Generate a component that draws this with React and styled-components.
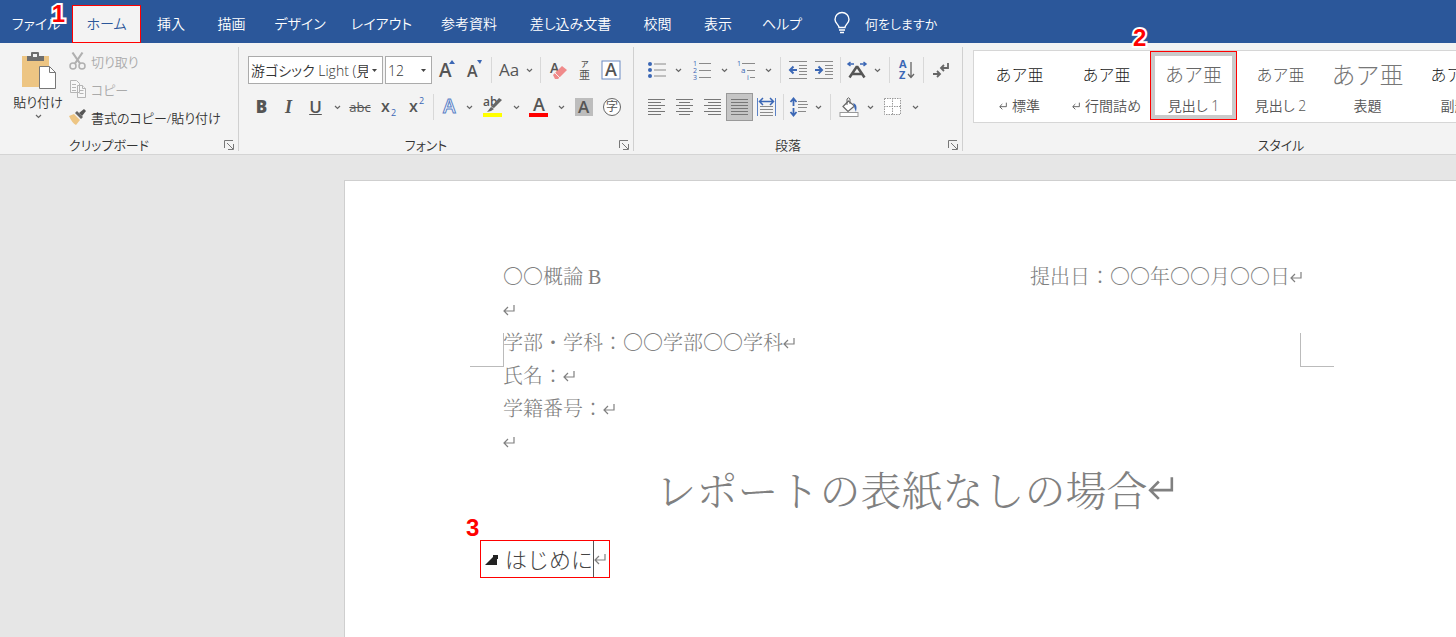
import React from 'react'
import styled, { createGlobalStyle, css } from 'styled-components'

const UI_FONT = "'Open Sans', 'Noto Sans CJK JP', sans-serif"
const DOC_FONT = "'Liberation Serif', 'Noto Serif CJK JP', 'Noto Sans CJK JP', serif"

const tabs = [
  { label: 'ファイル', width: 72, badge: '1' },
  { label: 'ホーム', width: 69, active: true },
  { label: '挿入', width: 60 },
  { label: '描画', width: 61 },
  { label: 'デザイン', width: 76 },
  { label: 'レイアウト', width: 87 },
  { label: '参考資料', width: 88 },
  { label: '差し込み文書', width: 115 },
  { label: '校閲', width: 59 },
  { label: '表示', width: 62 },
  { label: 'ヘルプ', width: 66 },
]

const styleItems = [
  { name: '標準', size: 16, color: '#222', mark: true },
  { name: '行間詰め', size: 16, color: '#222', mark: true },
  { name: '見出し 1', size: 19, color: '#666', selected: true },
  { name: '見出し 2', size: 16, color: '#555' },
  { name: '表題', size: 24, color: '#777' },
  { name: '副題', size: 16, color: '#222' },
]

const App = () => {
  return (
    <Window>
      <GlobalStyle />
      <TabBar aria-label="リボン タブ">
        {tabs.map((tab) => (
          <Tab key={tab.label} type="button" $width={tab.width} $active={tab.active}>
            {tab.label}
            {tab.badge && <TabBadge>{tab.badge}</TabBadge>}
          </Tab>
        ))}
        <TellMe type="button">
          <BulbIcon />
          何をしますか
        </TellMe>
      </TabBar>

      <Ribbon>
        <ClipboardGroup />
        <FontGroup />
        <ParagraphGroup />
        <StylesGroup />
      </Ribbon>

      <Workspace>
        <Page>
          <CropMark $side="left" />
          <CropMark $side="right" />
          <HeaderLine>
            <span>〇〇概論 B</span>
            <span>
              提出日：〇〇年〇〇月〇〇日
              <ReturnMark />
            </span>
          </HeaderLine>
          <Line>
            <ReturnMark />
          </Line>
          <Line>
            学部・学科：〇〇学部〇〇学科
            <ReturnMark />
          </Line>
          <Line>
            氏名：
            <ReturnMark />
          </Line>
          <Line>
            学籍番号：
            <ReturnMark />
          </Line>
          <Line>
            <ReturnMark />
          </Line>
          <Title>
            レポートの表紙なしの場合
            <ReturnMark size={26} />
          </Title>
          <Heading>
            <HeadingBadge>3</HeadingBadge>
            <CollapseIcon />
            <HeadingText>はじめに</HeadingText>
            <Caret />
            <ReturnMark />
          </Heading>
        </Page>
      </Workspace>
    </Window>
  )
}

const ClipboardGroup = () => (
  <Group $width={239}>
    <ClipboardBody>
      <PasteButton type="button">
        <PasteIcon />
        <span>貼り付け</span>
        <Chevron />
      </PasteButton>
      <ClipboardList>
        <ClipboardItem type="button" disabled>
          <ScissorsIcon />
          切り取り
        </ClipboardItem>
        <ClipboardItem type="button" disabled>
          <CopyIcon />
          コピー
        </ClipboardItem>
        <ClipboardItem type="button">
          <BrushIcon />
          書式のコピー/貼り付け
        </ClipboardItem>
      </ClipboardList>
    </ClipboardBody>
    <GroupFooter label="クリップボード" launcher />
  </Group>
)

const FontGroup = () => (
  <Group $width={395}>
    <ToolRows>
      <ToolRow>
        <ComboBox $width={135}>
          <select aria-label="フォント" defaultValue="yu">
            <option value="yu">游ゴシック Light (見出しのフォント)</option>
          </select>
          <ComboArrow />
        </ComboBox>
        <ComboBox $width={47}>
          <select aria-label="フォント サイズ" defaultValue="12">
            <option value="12">12</option>
          </select>
          <ComboArrow />
        </ComboBox>
        <Tool label="フォント サイズの拡大" width={28}>
          <svg width="18" height="22">
            <GlyphText x="0" y="18" $size={19} $weight={600}>A</GlyphText>
            <path d="M10 5l3-4 3 4z" fill="#3b67b5" />
          </svg>
        </Tool>
        <Tool label="フォント サイズの縮小" width={26}>
          <svg width="18" height="22">
            <GlyphText x="1" y="18" $size={16} $weight={600}>A</GlyphText>
            <path d="M11 1h5l-2 4z" fill="#3b67b5" />
          </svg>
        </Tool>
        <Divider />
        <Tool label="文字種の変換" width={26}>
          <Letter $size={17}>Aa</Letter>
        </Tool>
        <Menu label="文字種の変換メニュー" />
        <Divider />
        <Tool label="すべての書式をクリア" width={28}>
          <svg width="18" height="22">
            <GlyphText x="0" y="14" $size={14} $weight={600}>A</GlyphText>
            <path d="M3 16l9-9 5 4-9 9H5z" fill="#f08a8a" />
            <path d="M5 14l5 5" stroke="#f2f2f2" />
          </svg>
        </Tool>
        <Tool label="ルビ" width={24}>
          <svg width="14" height="22">
            <GlyphText x="3" y="8" $size={8} $weight={500}>ア</GlyphText>
            <GlyphText x="1" y="20" $size={11} $weight={400}>亜</GlyphText>
          </svg>
        </Tool>
        <Tool label="囲み線" width={28}>
          <svg width="20" height="20">
            <rect x="1" y="1" width="18" height="18" fill="#fff" stroke="#6d8cc4" />
            <GlyphText x="4" y="16" $size={18} $weight={600}>A</GlyphText>
          </svg>
        </Tool>
      </ToolRow>
      <ToolRow>
        <Tool label="太字" width={27}>
          <Letter $size={17} $weight={800}>B</Letter>
        </Tool>
        <Tool label="斜体" width={27}>
          <Letter as="i" $size={18} $weight={700} $serif>I</Letter>
        </Tool>
        <Tool label="下線" width={27}>
          <Letter as="u" $size={17} $weight={600}>U</Letter>
        </Tool>
        <Menu label="下線メニュー" wide />
        <Tool label="取り消し線" width={28}>
          <Letter as="s" $size={13}>abc</Letter>
        </Tool>
        <Tool label="下付き" width={28}>
          <svg width="14" height="22">
            <GlyphText x="0" y="16" $size={16} $weight={600}>x</GlyphText>
            <GlyphText x="10" y="20" $size={9} $color="#3b67b5">2</GlyphText>
          </svg>
        </Tool>
        <Tool label="上付き" width={28}>
          <svg width="14" height="22">
            <GlyphText x="0" y="16" $size={16} $weight={600}>x</GlyphText>
            <GlyphText x="10" y="8" $size={9} $color="#3b67b5">2</GlyphText>
          </svg>
        </Tool>
        <Divider />
        <Tool label="文字の効果" width={24}>
          <svg width="18" height="22">
            <GlyphText x="2" y="17" $size={19} $weight={600} $color="#fff" $stroke="#5b82c6">A</GlyphText>
          </svg>
        </Tool>
        <Menu label="文字の効果メニュー" />
        <Tool label="蛍光ペンの色" width={32}>
          <svg width="20" height="22">
            <GlyphText x="0" y="10" $size={12} $weight={600}>ab</GlyphText>
            <path d="M19 4l-8 8-3-1 8-9z" fill="#666" />
            <path d="M8 11l3 2-3 2-4 1z" fill="#666" />
            <rect x="0" y="17" width="19" height="4" fill="#ff0" />
          </svg>
        </Tool>
        <Menu label="蛍光ペンメニュー" />
        <Tool label="フォントの色" width={30}>
          <svg width="20" height="22">
            <GlyphText x="4" y="15" $size={18} $weight={600}>A</GlyphText>
            <rect x="0" y="17" width="19" height="4" fill="#f00" />
          </svg>
        </Tool>
        <Menu label="フォントの色メニュー" />
        <Tool label="文字の網かけ" width={30}>
          <svg width="18" height="18">
            <rect width="18" height="18" fill="#bdbdbd" />
            <GlyphText x="3" y="15" $size={17} $weight={600}>A</GlyphText>
          </svg>
        </Tool>
        <Tool label="囲い文字" width={26}>
          <svg width="20" height="20">
            <circle cx="10" cy="10" r="8.5" fill="#fff" stroke="#666" />
            <GlyphText x="4" y="14" $size={12}>字</GlyphText>
          </svg>
        </Tool>
      </ToolRow>
    </ToolRows>
    <GroupFooter label="フォント" launcher />
  </Group>
)

const ParagraphGroup = () => (
  <Group $width={329}>
    <ToolRows>
      <ToolRow>
        <Tool label="箇条書き" width={27}>
          <svg width="18" height="18" fill="#3b67b5">
            <circle cx="2" cy="3" r="2" />
            <circle cx="2" cy="9" r="2" />
            <circle cx="2" cy="15" r="2" />
            <path d="M6 3h12M6 9h12M6 15h12" stroke="#8a8a8a" />
          </svg>
        </Tool>
        <Menu label="箇条書きメニュー" wide />
        <Tool label="段落番号" width={30}>
          <svg width="18" height="20">
            <GlyphText x="0" y="6" $size={7} $color="#3b67b5">1</GlyphText>
            <GlyphText x="0" y="13" $size={7} $color="#3b67b5">2</GlyphText>
            <GlyphText x="0" y="20" $size={7} $color="#3b67b5">3</GlyphText>
            <path d="M6 3.500h12M6 10.500h12M6 17.500h12" stroke="#8a8a8a" />
          </svg>
        </Tool>
        <Menu label="段落番号メニュー" />
        <Tool label="アウトライン" width={28}>
          <svg width="18" height="20">
            <GlyphText x="0" y="6" $size={7} $color="#3b67b5">1</GlyphText>
            <GlyphText x="4" y="13" $size={8} $color="#3b67b5">a</GlyphText>
            <GlyphText x="10" y="20" $size={7} $color="#3b67b5">i</GlyphText>
            <path d="M5 3.500h13M10 10.500h8M13 17.500h5" stroke="#8a8a8a" />
          </svg>
        </Tool>
        <Menu label="アウトラインメニュー" wide />
        <Divider />
        <Tool label="インデントを減らす" width={26}>
          <IndentIcon arrow="M1 9h7M4.500 5.500L1 9l3.500 3.500" />
        </Tool>
        <Tool label="インデントを増やす" width={26}>
          <IndentIcon arrow="M0 9h7M3.500 5.500L7 9l-3.500 3.500" />
        </Tool>
        <Divider />
        <Tool label="拡張書式" width={24}>
          <svg width="20" height="18">
            <path d="M2.500 16.500L9.500 6h1l7 10.500M5 13h10" fill="none" stroke="#555" strokeWidth="2.500" />
            <path d="M1 3h6M3.500 1L1 3l2.500 2M13 3h6M16.500 1L19 3l-2.500 2" fill="none" stroke="#3b67b5" strokeWidth="1.500" />
          </svg>
        </Tool>
        <Menu label="拡張書式メニュー" wide />
        <Divider />
        <Tool label="並べ替え" width={26}>
          <svg width="18" height="22">
            <GlyphText x="1" y="9" $size={11} $weight={700} $color="#3b67b5">A</GlyphText>
            <GlyphText x="1" y="20" $size={11} $weight={700} $color="#3b67b5">Z</GlyphText>
            <path d="M13 3v15M10 15l3 3.500 3-3.500" fill="none" stroke="#666" strokeWidth="1.300" />
          </svg>
        </Tool>
        <Divider />
        <Tool label="編集記号の表示" width={26}>
          <svg width="18" height="18" fill="none" stroke="#666" strokeWidth="1.800">
            <path d="M16 2v5H9M12 4L9 7l3 3M1 13h7M5 10l3 3-3 3" />
          </svg>
        </Tool>
      </ToolRow>
      <ToolRow>
        <Tool label="左揃え" width={27}>
          <AlignIcon d="M0 1h17M0 4h13M0 7h17M0 10h13M0 13h17M0 16h13" />
        </Tool>
        <Tool label="中央揃え" width={28}>
          <AlignIcon d="M0 1h17M3 4h11M0 7h17M3 10h11M0 13h17M3 16h11" />
        </Tool>
        <Tool label="右揃え" width={28}>
          <AlignIcon d="M0 1h17M4 4h13M0 7h17M4 10h13M0 13h17M4 16h13" />
        </Tool>
        <Tool label="両端揃え" width={27} pressed>
          <AlignIcon d="M0 1h17M0 4h17M0 7h17M0 10h17M0 13h17M0 16h17" />
        </Tool>
        <Tool label="均等割り付け" width={27}>
          <svg width="19" height="20" fill="none">
            <path d="M.5 1v18M18.500 1v18" stroke="#5b82c6" />
            <path d="M3 4.500h13M6 1L2.500 4.500 6 8M13 1l3.500 3.500L13 8" stroke="#3b67b5" strokeWidth="1.500" />
            <path d="M3 9.500h13M3 12.500h13M3 15.500h13M3 18.500h13" stroke="#8a8a8a" />
          </svg>
        </Tool>
        <Divider />
        <Tool label="行と段落の間隔" width={22}>
          <svg width="18" height="20" fill="none">
            <path d="M3.500 2v7M.5 5l3-3.500 3 3.500M3.500 11v7M.5 15l3 3.500 3-3.500" stroke="#3b67b5" strokeWidth="1.800" />
            <path d="M8 4.500h9M8 7.500h10M8 10.500h9M8 14.500h8" stroke="#8a8a8a" />
          </svg>
        </Tool>
        <Menu label="行間メニュー" wide />
        <Divider />
        <Tool label="塗りつぶし" width={28}>
          <svg width="20" height="20">
            <path d="M9.500 4L4 9.500l5 5 6.500-5.500z" fill="#fff" stroke="#666" strokeWidth="1.200" />
            <path d="M8 8V2q1.500-2.500 3 0v5" fill="none" stroke="#666" />
            <path d="M14 6q5 1 3 9-2-4-2-7z" fill="#3b67b5" />
            <rect x="1" y="15.500" width="18" height="4" fill="#fff" stroke="#999" />
          </svg>
        </Tool>
        <Menu label="塗りつぶしメニュー" />
        <Tool label="罫線" width={30}>
          <svg width="18" height="18" fill="#fff" stroke="#999" strokeDasharray="1.500 1">
            <rect x=".5" y=".5" width="16" height="16" />
            <path d="M8.500 0v17M0 8.500h17" />
          </svg>
        </Tool>
        <Menu label="罫線メニュー" />
      </ToolRow>
    </ToolRows>
    <GroupFooter label="段落" launcher />
  </Group>
)

const StylesGroup = () => (
  <StylesPanel>
    <Gallery>
      {styleItems.map((item) => (
        <StyleCard key={item.name} type="button" $selected={item.selected}>
          {item.selected && <CardBadge>2</CardBadge>}
          <Sample $size={item.size} $color={item.color}>
            あア亜
          </Sample>
          <CardName>
            {item.mark && <ReturnMark size={8} color="#444" />}
            {item.name}
          </CardName>
        </StyleCard>
      ))}
    </Gallery>
    <GroupFooter label="スタイル" />
  </StylesPanel>
)

const GroupFooter = ({ label, launcher }) => (
  <Footer>
    {label}
    {launcher && (
      <Launcher type="button" aria-label={`${label}の設定`}>
        <svg width="10" height="10" fill="none" stroke="#777">
          <path d="M.5 8V.5H9M3 3l6 6M9.500 4v5.500H4" />
        </svg>
      </Launcher>
    )}
  </Footer>
)

const Tool = ({ label, width, pressed, children }) => (
  <ToolButton type="button" aria-label={label} aria-pressed={pressed} $width={width} $pressed={pressed}>
    {children}
  </ToolButton>
)

const Menu = ({ label, wide }) => (
  <ToolButton type="button" aria-label={label} $width={wide ? 17 : 15}>
    <Chevron />
  </ToolButton>
)

const Chevron = () => (
  <svg width="7" height="5" fill="none" stroke="#666" strokeWidth="1.200">
    <path d="M1 1l2.500 2.500L6 1" />
  </svg>
)

const ComboArrow = () => (
  <svg width="5" height="3" fill="#444">
    <path d="M0 0h5L2.500 3z" />
  </svg>
)

const AlignIcon = ({ d }) => (
  <svg width="17" height="18" fill="none" stroke="#777">
    <path d={d} transform="translate(0 .5)" />
  </svg>
)

const IndentIcon = ({ arrow }) => (
  <svg width="18" height="18" fill="none">
    <path d="M0 .5h18M10 4.500h8M10 7.500h8M10 10.500h8M10 13.500h8M0 17.500h18" stroke="#8a8a8a" />
    <path d={arrow} stroke="#3b67b5" strokeWidth="2" />
  </svg>
)

const ReturnMark = ({ size = 12, color = '#808080' }) => (
  <svg width={size} height={size} viewBox="0 0 12 12" fill="none" stroke={color} strokeWidth="1.200" aria-hidden="true">
    <path d="M11 1v6H1.500M5 3L1 7l4 4" />
  </svg>
)

const BulbIcon = () => (
  <svg width="16" height="22" fill="none" stroke="#fff" strokeWidth="1.400">
    <path d="M5 15.500c0-3-4-4-4-8a7 7 0 0 1 14 0c0 4-4 5-4 8zM5 18h6M6 20.500h4" />
  </svg>
)

const PasteIcon = () => (
  <svg width="34" height="37">
    <rect x="1" y="4" width="27" height="31" fill="#edc583" />
    <path d="M6 4h4V1q0-1 1-1h6q1 0 1 1v3h5v5H6z" fill="#6e6e6e" />
    <rect x="12" y="2" width="4" height="3" fill="#f3f3f3" />
    <path d="M18.500 14.500h10l6 6v16h-16z" fill="#fff" stroke="#777" />
    <path d="M28.500 14.500v6h6" fill="none" stroke="#777" />
  </svg>
)

const ScissorsIcon = () => (
  <svg width="18" height="20" fill="none" stroke="#b0b0b0" strokeWidth="1.500">
    <circle cx="4" cy="15" r="3" />
    <circle cx="13" cy="15" r="3" />
    <path d="M3.500 1.500L11 12.500M13.500 1.500L6 12.500" strokeWidth="2.200" />
  </svg>
)

const CopyIcon = () => (
  <svg width="18" height="20" fill="#f7f7f7" stroke="#b5b5b5">
    <path d="M1.500 1.500h6l3 3v9h-9zM8.500 6.500h5l3 3v9h-8z" />
    <path d="M3 5.500h4M3 8.500h4M3 11.500h4M10.500 11.500h4M10.500 14.500h4M13.500 6.500v3h3" />
  </svg>
)

const BrushIcon = () => (
  <svg width="18" height="18">
    <path d="M0 8l5-2 6 6-4 5q-4-2-7-9z" fill="#edc583" />
    <path d="M6 5l2-2 6 6-2 2z" fill="#666" />
    <path d="M10 5l5-4 2 2-4 5z" fill="#555" />
  </svg>
)

const CollapseIcon = () => (
  <svg width="13" height="11" aria-hidden="true">
    <path d="M0 11L8 3V1h5v4h-1v6z" fill="#222" />
  </svg>
)

const GlobalStyle = createGlobalStyle`
  * {
    box-sizing: border-box;
  }

  body {
    margin: 0;
    background: #e6e6e6;
  }

  button,
  select {
    font: inherit;
    font-feature-settings: inherit;
    color: inherit;
  }

  button {
    padding: 0;
    border: none;
    background: none;
    white-space: nowrap;
  }

  svg {
    flex: none;
    overflow: visible;
  }
`

const Window = styled.div`
  display: flex;
  flex-direction: column;
  min-height: 100vh;
  overflow: hidden;
  font-family: ${UI_FONT};
  font-size: 14px;
  font-weight: 350;
  font-feature-settings: 'palt';
  color: #333;
`

const TabBar = styled.nav`
  display: flex;
  height: 43px;
  padding-top: 5px;
  background: #2b579a;
  color: #fff;
`

const Tab = styled.button`
  position: relative;
  flex: none;
  width: ${(props) => props.$width}px;
  padding-bottom: 2px;

  ${(props) =>
    props.$active &&
    css`
      border: 1px solid #f00;
      background: #f3f3f3;
      color: #2b579a;
    `}
`

const TellMe = styled.button`
  display: flex;
  align-items: center;
  gap: 15px;
  padding: 0 0 2px 19px;
  font-size: 13px;
`

const Badge = styled.span`
  position: absolute;
  z-index: 1;
  font: bold 24px/24px 'Liberation Sans', sans-serif;
  color: #f00;
  -webkit-text-stroke: 4px #fff;
  paint-order: stroke fill;
`

const TabBadge = styled(Badge)`
  top: -3px;
  right: 7px;
`

const CardBadge = styled(Badge)`
  top: -25px;
  left: -17px;
`

const HeadingBadge = styled(Badge)`
  top: -25px;
  left: -15px;
`

const Ribbon = styled.header`
  display: flex;
  height: 112px;
  background: #f3f3f3;
  border-bottom: 1px solid #d4d4d4;
`

const Group = styled.section`
  display: flex;
  flex: none;
  flex-direction: column;
  justify-content: space-between;
  width: ${(props) => props.$width}px;
  margin: 4px 0 3px;
  border-right: 1px solid #d0d0d0;
`

const Footer = styled.div`
  position: relative;
  height: 20px;
  margin-bottom: -4px;
  line-height: 20px;
  text-align: center;
  padding-right: 20px;
  font-size: 13px;
`

const Launcher = styled.button`
  position: absolute;
  right: 4px;
  top: 5px;
  width: 10px;
  height: 10px;
  line-height: 0;
`

const ClipboardBody = styled.div`
  display: flex;
  gap: 5px;
  padding-left: 12px;
  font-size: 13px;
`

const PasteButton = styled.button`
  display: flex;
  flex-direction: column;
  align-items: center;
  gap: 3px;
  width: 52px;
  padding-top: 5px;
`

const ClipboardList = styled.div`
  display: flex;
  flex-direction: column;
`

const ClipboardItem = styled.button`
  display: flex;
  align-items: center;
  gap: 4px;
  height: 28px;

  &:disabled {
    color: #aaa;
  }
`

const ToolRows = styled.div`
  display: flex;
  flex-direction: column;
  gap: 9px;
  padding: 9px 0 0 9px;
`

const ToolRow = styled.div`
  display: flex;
  align-items: center;
  height: 28px;
`

const ToolButton = styled.button`
  display: flex;
  flex: none;
  align-items: center;
  justify-content: center;
  width: ${(props) => props.$width}px;
  height: 28px;

  ${(props) =>
    props.$pressed &&
    css`
      background: #c5c5c5;
      border: 1px solid #999;
    `}
`

const Divider = styled.span`
  flex: none;
  width: 1px;
  height: 26px;
  margin: 0 4px 0 3px;
  background: #d8d8d8;
`

const ComboBox = styled.div`
  display: flex;
  align-items: center;
  width: ${(props) => props.$width}px;
  height: 28px;
  margin-right: 2px;
  padding-right: 5px;
  border: 1px solid #ababab;
  background: #fff;

  select {
    flex: 1;
    min-width: 0;
    height: 26px;
    padding: 0 4px 0 2px;
    border: none;
    outline: none;
    background: none;
    appearance: none;
    font-size: 14px;
    text-overflow: clip;
  }
`

const Letter = styled.span`
  font-family: ${(props) => (props.$serif ? "'Liberation Serif', serif" : UI_FONT)};
  font-size: ${(props) => props.$size}px;
  font-weight: ${(props) => props.$weight || 400};
  line-height: 20px;
  color: #555;
`

const GlyphText = styled.text`
  font-family: ${UI_FONT};
  font-size: ${(props) => props.$size}px;
  font-weight: ${(props) => props.$weight || 400};
  fill: ${(props) => props.$color || '#555'};
  stroke: ${(props) => props.$stroke || 'none'};
`

const StylesPanel = styled.section`
  display: flex;
  flex: none;
  flex-direction: column;
  justify-content: space-between;
  width: 646px;
  padding: 7px 0 3px 10px;
`

const Gallery = styled.div`
  display: flex;
  height: 73px;
  padding-left: 2px;
  border: 1px solid #d6d6d6;
  background: #fff;
`

const StyleCard = styled.button`
  position: relative;
  display: flex;
  flex: none;
  flex-direction: column;
  align-items: center;
  width: 87px;
  height: 69px;

  ${(props) =>
    props.$selected &&
    css`
      outline: 1px solid #f00;
      outline-offset: -1px;
      box-shadow: inset 0 0 0 5px #cacaca;
    `}
`

const Sample = styled.span`
  height: 48px;
  line-height: 48px;
  font-feature-settings: normal;
  font-size: ${(props) => props.$size}px;
  font-weight: 300;
  color: ${(props) => props.$color};
`

const CardName = styled.span`
  display: flex;
  align-items: center;
  gap: 5px;
  height: 14px;
  line-height: 14px;
  color: #555;
`

const Workspace = styled.main`
  display: flex;
  flex: 1;
  padding: 25px 0 0 344px;
  background: #e6e6e6;
`

const Page = styled.article`
  position: relative;
  flex: 1;
  padding: 80px 154px 40px 135px;
  border: 1px solid #cfcfcf;
  border-width: 1px 0 0 1px;
  background: #fff;
  font-family: ${DOC_FONT};
  font-feature-settings: normal;
  font-size: 20px;
  font-weight: 300;
  color: #808080;
`

const Line = styled.p`
  margin: 0;
  padding-left: 23px;
  height: 33px;
  line-height: 33px;

  svg {
    vertical-align: 1px;
  }
`

const HeaderLine = styled(Line)`
  display: flex;
  justify-content: space-between;
`

const Title = styled.h1`
  display: flex;
  align-items: center;
  justify-content: center;
  height: 58px;
  margin: 0;
  padding-left: 47px;
  font-size: 41px;
  font-weight: 300;
  white-space: nowrap;
`

const Heading = styled.h2`
  position: relative;
  display: inline-flex;
  align-items: center;
  height: 38px;
  margin: 23px 0 0;
  padding: 0 3px 0 4px;
  border: 1px solid #f00;
  font-family: ${UI_FONT};
  font-size: 22px;
  font-weight: 300;
  line-height: 36px;
  color: #444;
`

const HeadingText = styled.span`
  padding-left: 7px;
`

const Caret = styled.span`
  width: 1px;
  height: 36px;
  background: #555;
`

const CropMark = styled.span`
  position: absolute;
  top: 152px;
  width: 34px;
  height: 34px;
  border-bottom: 1px solid #bbb;

  ${(props) =>
    props.$side === 'left'
      ? css`
          left: 125px;
          border-right: 1px solid #bbb;
        `
      : css`
          right: 122px;
          border-left: 1px solid #bbb;
        `}
`

export default App
